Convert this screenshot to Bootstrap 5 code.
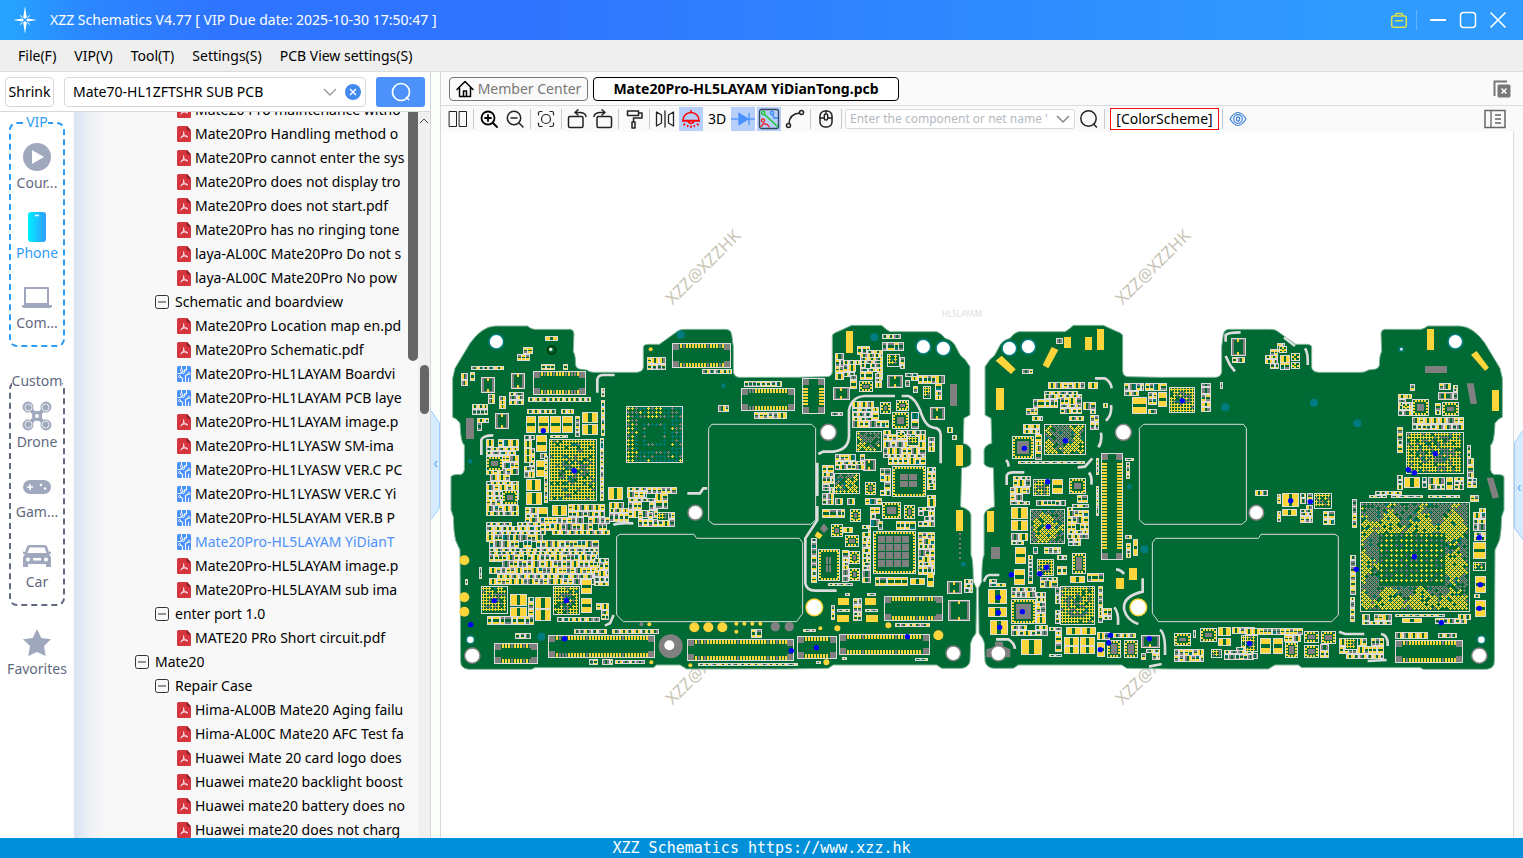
<!DOCTYPE html>
<html lang="en">
<head>
<meta charset="utf-8">
<meta name="viewport" content="width=device-width, initial-scale=1">
<title>XZZ Schematics</title>
<link href="https://cdn.jsdelivr.net/npm/bootstrap@5.3.0/dist/css/bootstrap.min.css" rel="stylesheet">
<style>
  body { font: 14px/20px "Noto Sans", "Open Sans", sans-serif; color: #000; background: #fff; }
  button { color: inherit; }
  .plain { background: none; border: 0; padding: 0; }
  .titlebar { height: 40px; gap: 12px; color: #fff; background: linear-gradient(90deg, #25a5ff 0, #2b86ff 90px, #2f74ff 220px, #2f74ff 520px, #2f9bff 1350px); }
  .menubar { height: 32px; gap: 18px; padding-left: 18px; background: #efefef; border-bottom: 1px solid #dcdcdc; }
  .menubar a { color: #000; text-decoration: none; }
  .side { width: 431px; border-right: 1px solid #d6d6d6; }
  .finder { height: 40px; gap: 10px; padding: 0 5px; border-bottom: 1px solid #d6dad6; }
  .finder > .shrink { width: 49px; height: 30px; border: 1px solid #d9d9d9; border-radius: 4px; background: #fff; }
  .combo { height: 30px; border: 1px solid #d9d9d9; border-radius: 4px; }
  .combo input { border: 0; outline: 0; min-width: 0; background: none; color: #000; }
  .combo input::placeholder { color: #b4b9c1; opacity: 1; }
  .go { width: 49px; height: 30px; background: #4d92fb; border-radius: 3px; }
  .rail { width: 74px; padding-top: 10px; color: #5f6980; }
  .rail-box { width: 56px; padding-bottom: 3px; border: 2px dashed #5f6980; border-radius: 8px; }
  .rail-box + .rail-box { margin-top: 34px; }
  .rail-box.vip { border-color: #2e9bf5; }
  .rail-name { margin-top: -12px; line-height: 20px; }
  .rail-name span { background: #fff; }
  .vip .rail-name, .rail .on { color: #2e9bf5; }
  .rail-item { height: 70px; width: 66px; }
  .rail-item.last { margin-top: 12px; }
  .rail-item svg { width: 32px; height: 32px; fill: #a0a8bd; }
  .tree { background: linear-gradient(90deg, #d8e2f3 0, #eceff5 14px, #f8f8f8 34px); min-width: 0; }
  .tree ul { list-style: none; margin: 0; padding: 0; }
  .tree-list { margin-top: -14px !important; width: 333px; overflow: hidden; }
  .tree li > button { display: flex; align-items: center; height: 24px; white-space: nowrap; }
  .tree .pick { color: #4d92fb; }
  .lvl1 > li > button { padding-left: 61px; gap: 6px; }
  .lvl2 > li > button { padding-left: 81px; gap: 6px; }
  .lvl3 > li > button { padding-left: 103px; gap: 4px; }
  .inner-bar { width: 10px; height: 249px; background: #666; border-radius: 0 0 5px 5px; }
  .outer-bar { width: 12px; background: #f0f0f0; }
  .outer-bar i { width: 9px; height: 49px; background: #666; border-radius: 5px; margin-top: 239px; }
  .splitter { width: 9px; padding-top: 19px; background: #fafffa; }
  .view { border-left: 1px solid #d9d9d9; min-width: 0; }
  .tabs { height: 34px; gap: 5px; background: #fafafa; border-bottom: 1px solid #dcdcdc; }
  .doc-tab { height: 24px; border: 1px solid #000; border-radius: 4px; background: #fff; }
  .doc-tab.home { width: 139px; color: #777; border-color: #777; background: #fafafa; }
  .doc-tab.file { width: 306px; font-weight: 700; }
  .tools { height: 26px; background: #fafafa; gap: 2px; padding-left: 5px; }
  .tools button.tool { width: 24px; height: 24px; flex: none; display: flex; align-items: center; justify-content: center; }
  .tool.held { background: #b6cffb !important; }
  .tools hr { width: 1px; height: 20px; margin: 0 1px; border: 0; background: #c9c9c9; opacity: 1; flex: none; }
  .net { width: 230px; height: 20px; border: 1px solid #d9d9d9; border-radius: 3px; background: #fff; font-size: 12px; }
  .scheme { width: 109px; height: 22px; border: 1px solid #e11; margin-left: 2px; background: #fff; }
  .stage { min-height: 0; background: #fff; }
  .gutter { width: 10px; background: #fafafa; border-left: 1px solid #d9d9d9; }
  .foot { height: 20px; background: #0090d9; color: #fff; font: 15px/20px "DejaVu Sans Mono", monospace; }
  .line { fill: none; stroke: #222; stroke-width: 1.5; stroke-linecap: round; stroke-linejoin: round; }
</style>
</head>
<body class="vh-100 d-flex flex-column overflow-hidden">

<svg width="0" height="0" class="position-absolute" aria-hidden="true">
  <defs>
    <symbol id="pdf" viewBox="0 0 14 16">
      <path d="M1.500 0H10l4 4.500V14.500a1.500 1.500 0 0 1-1.500 1.500h-11A1.500 1.500 0 0 1 0 14.500v-13A1.500 1.500 0 0 1 1.500 0Z" fill="#d4353f"/>
      <path d="M10 0l4 4.500h-4Z" fill="#8e1a22"/>
      <path d="M6.600 5.500c.8 2-.3 4.800-3 6.700M7 8.300c.8 1.600 2 2.500 4 2.700M4.600 10.700c1.800-.8 3.500-1 5.600-.6" fill="none" stroke="#fff" stroke-width="1"/>
    </symbol>
    <symbol id="pcb" viewBox="0 0 14 16">
      <rect width="14" height="16" rx="1.500" fill="#4c91fa"/>
      <path d="M4.500 0v3.500M9.500 0v4h-2v2.500M.5 7.500h3l2-1.500M5.500 16v-3.500L3 10.500M8.500 16V9.500l3-1.500M11.500 16v-4" fill="none" stroke="#fff" stroke-width="1.100"/>
      <g fill="#4c91fa" stroke="#fff" stroke-width=".9"><circle cx="4.500" cy="4.300" r="1"/><circle cx="6.300" cy="6.500" r="1"/><circle cx="2.600" cy="10.500" r="1"/><circle cx="12" cy="7.500" r="1"/></g>
    </symbol>
    <symbol id="minus" viewBox="0 0 14 14">
      <rect x=".5" y=".5" width="13" height="13" rx="2" fill="none" stroke="#333"/><path d="M3 7h8" stroke="#333"/>
    </symbol>
  </defs>
</svg>

<header class="titlebar d-flex align-items-center ps-2 flex-shrink-0">
  <svg class="ms-1" width="26" height="32" viewBox="0 0 26 32" fill="#fff">
    <path d="M13 2l1.800 11.500L13 15l-1.800-1.500ZM13 30l1.800-11.500L13 17l-1.800 1.500ZM1 16l9.500-1.600L12 16l-1.500 1.600ZM25 16l-9.500-1.600L14 16l1.500 1.600Z"/>
    <path d="M8 11.500q2 1 2.500 2.300M18 11.500q-2 1-2.500 2.300M8 20.500q2-1 2.500-2.300M18 20.500q-2-1-2.500-2.300" stroke="#fff" fill="none"/>
  </svg>
  <span>XZZ Schematics V4.77 [ VIP Due date: 2025-10-30 17:50:47 ]</span>
  <div class="ms-auto d-flex align-items-center pe-3">
    <button class="plain" aria-label="Membership"><svg class="d-block" width="18" height="18" viewBox="0 0 18 18" fill="none" stroke="#d5e04a" stroke-width="1.500"><rect x="1.700" y="5" width="14.600" height="11.300" rx="2"/><path d="M5.500 5V3.500a1 1 0 0 1 1-1h5a1 1 0 0 1 1 1V5M5 9.700h8"/></svg></button>
    <span class="vr mx-2 my-auto" style="height:20px"></span>
    <button class="plain ms-1 me-2" aria-label="Minimize"><svg class="d-block" width="18" height="18" viewBox="0 0 18 18"><path d="M1 9h16" stroke="#fff" stroke-width="2"/></svg></button>
    <button class="plain ms-1 me-2" aria-label="Maximize"><svg class="d-block" width="18" height="18" viewBox="0 0 18 18"><rect x="1.500" y="1.500" width="15" height="15" rx="3" fill="none" stroke="#fff" stroke-width="1.500"/></svg></button>
    <button class="plain ms-1" aria-label="Close"><svg class="d-block" width="18" height="18" viewBox="0 0 18 18"><path d="M1.500 1.500l15 15M16.500 1.500l-15 15" stroke="#fff" stroke-width="1.600"/></svg></button>
  </div>
</header>

<nav class="menubar d-flex align-items-center flex-shrink-0">
  <a href="#">File(F)</a><a href="#">VIP(V)</a><a href="#">Tool(T)</a><a href="#">Settings(S)</a><a href="#">PCB View settings(S)</a>
</nav>

<main class="d-flex flex-grow-1" style="min-height:0">
  <section class="side d-flex flex-column flex-shrink-0">
    <div class="finder d-flex align-items-center flex-shrink-0">
      <button class="shrink p-0">Shrink</button>
      <div class="combo d-flex align-items-center flex-grow-1 ps-2 pe-1">
        <input class="flex-grow-1 p-0" type="text" value="Mate70-HL1ZFTSHR SUB PCB" aria-label="Search files">
        <button class="plain me-2" aria-label="Show list"><svg class="d-block" width="14" height="14" viewBox="0 0 14 14"><path d="M1 4l6 6 6-6" fill="none" stroke="#999" stroke-width="1.400"/></svg></button>
        <button class="plain" aria-label="Clear"><svg class="d-block" width="16" height="16" viewBox="0 0 16 16"><circle cx="8" cy="8" r="8" fill="#4289ee"/><path d="M5 5l6 6M11 5l-6 6" stroke="#fff" stroke-width="1.400"/></svg></button>
      </div>
      <button class="plain go d-flex align-items-center justify-content-center" aria-label="Search"><svg width="22" height="20" viewBox="0 0 22 20" fill="none" stroke="#fff" stroke-width="1.700"><circle cx="11" cy="10" r="8.500"/><path d="M16 15l3 3"/></svg></button>
    </div>

    <div class="d-flex flex-grow-1 overflow-hidden">
      <nav class="rail d-flex flex-column align-items-center flex-shrink-0">
        <div class="rail-box vip d-flex flex-column align-items-center">
          <div class="rail-name"><span>VIP</span></div>
          <button class="plain rail-item"><svg viewBox="0 0 32 32"><path fill-rule="evenodd" d="M16 2a14 14 0 1 1 0 28 14 14 0 0 1 0-28Zm-5 7v14l12-7Z"/></svg><div>Cour...</div></button>
          <button class="plain rail-item on"><svg viewBox="0 0 32 32"><defs><linearGradient id="ph"><stop offset="0" stop-color="#00efff"/><stop offset="1" stop-color="#2f9bff"/></linearGradient></defs><rect x="7" y="1" width="18" height="30" rx="3" fill="url(#ph)"/><path d="M14 4.500h4" stroke="#fff" stroke-width="1.500"/></svg><div>Phone</div></button>
          <button class="plain rail-item"><svg viewBox="0 0 32 32"><path fill-rule="evenodd" d="M5 6h22q1 0 1 1v17H3V7q0-1 1-1Zm0 3v13h21V8H5ZM1 24h30v1q0 2-2 2H3q-2 0-2-2Z"/></svg><div>Com...</div></button>
        </div>
        <div class="rail-box d-flex flex-column align-items-center">
          <div class="rail-name"><span>Custom</span></div>
          <button class="plain rail-item"><svg viewBox="0 0 32 32"><path d="M7 7l18 18M25 7L7 25" stroke="#a0a8bd" stroke-width="4"/><circle cx="16" cy="16" r="5"/><circle cx="16" cy="16" r="2" fill="#fff"/><g fill="#a0a8bd" stroke="#a0a8bd"><circle cx="7" cy="7" r="5"/><circle cx="25" cy="7" r="5"/><circle cx="7" cy="25" r="5"/><circle cx="25" cy="25" r="5"/></g><g fill="none" stroke="#fff" stroke-width=".8"><circle cx="7.500" cy="7.500" r="3.500"/><circle cx="24.500" cy="7.500" r="3.500"/><circle cx="7.500" cy="24.500" r="3.500"/><circle cx="24.500" cy="24.500" r="3.500"/></g></svg><div>Drone</div></button>
          <button class="plain rail-item"><svg viewBox="0 0 32 32"><rect x="2" y="10" width="28" height="14" rx="7"/><path d="M6 17h6M9 14v6" stroke="#fff" stroke-width="1.600"/><circle cx="20" cy="15" r="1.200" fill="#fff"/><circle cx="24" cy="18.500" r="1.200" fill="#fff"/></svg><div>Gam...</div></button>
          <button class="plain rail-item"><svg viewBox="0 0 32 32"><path fill-rule="evenodd" d="M8 5h16q1.500 0 2 1.500L28 12l2-.5v2l-2 1q2 1 2 4V27h-5v-3H7v3H2v-8.500q0-3 2-4l-2-1v-2l2 .5 2-5.500Q6.500 5 8 5Zm.5 2.500L6.500 13h19l-2-5.500ZM7 17.500a2 2 0 1 0 0 4 2 2 0 0 0 0-4Zm18 0a2 2 0 1 0 0 4 2 2 0 0 0 0-4ZM12 18v2.500h8V18Z"/></svg><div>Car</div></button>
        </div>
        <button class="plain rail-item last"><svg viewBox="0 0 32 32"><path d="M16 2l4.300 8.900 9.700 1.300-7 6.900 1.700 9.900L16 25l-8.700 4L9 19.100l-7-6.900 9.700-1.300Z"/></svg><div>Favorites</div></button>
      </nav>

      <div class="tree d-flex flex-grow-1">
        <ul class="tree-list flex-shrink-0 lvl1" id="tree"></ul>
        <div class="inner-bar ms-auto"></div>
      </div>
      <div class="outer-bar d-flex flex-column align-items-center flex-shrink-0">
        <svg class="mt-1" width="10" height="10" viewBox="0 0 10 10"><path d="M1 7l4-4 4 4" fill="none" stroke="#444"/></svg>
        <i></i>
      </div>
    </div>
  </section>

  <div class="splitter d-flex align-items-center flex-shrink-0">
    <button class="plain" aria-label="Collapse left panel"><svg class="d-block" width="9" height="110" viewBox="0 0 9 110"><path d="M0 .5l8.500 12.500v85L0 109.500" fill="#d6ebff" stroke="#9ccfff"/><path d="M6 51L3.500 54 6 57" fill="none" stroke="#2e8ff0"/></svg></button>
  </div>

  <section class="view d-flex flex-column flex-grow-1">
    <div class="tabs d-flex align-items-center flex-shrink-0 ps-2 pe-2">
      <button class="doc-tab home p-0 d-flex align-items-center justify-content-center gap-1"><svg width="18" height="18" viewBox="0 0 18 18" class="line" style="stroke:#000"><path d="M1 9.500L9 1.500l8 8M3.500 8v8.500h11V8M7.500 16v-5h3v5"/></svg>Member Center</button>
      <button class="doc-tab file p-0">Mate20Pro-HL5LAYAM YiDianTong.pcb</button>
      <button class="plain ms-auto me-1" aria-label="Close all tabs"><svg class="d-block" width="18" height="18" viewBox="0 0 18 18"><path d="M1.500 16V1.500H14" fill="none" stroke="#777" stroke-width="2"/><rect x="4.500" y="4.500" width="13" height="13" rx="1.500" fill="#777"/><path d="M8.500 8.500l5 5M13.500 8.500l-5 5" stroke="#fff" stroke-width="1.500"/></svg></button>
    </div>
    <div class="tools d-flex align-items-center flex-shrink-0">
      <button class="plain tool" aria-label="Split view"><svg width="20" height="18" viewBox="0 0 20 18" class="line" style="stroke-width:1"><path d="M1.500 1.500h7v15h-7ZM11.500 1.500h7v15h-7Z"/></svg></button>
      <hr>
      <button class="plain tool" aria-label="Zoom in"><svg width="18" height="18" viewBox="0 0 18 18" class="line" style="stroke:#000;stroke-width:1.800"><circle cx="8" cy="8" r="6.500"/><path d="M13 13l4 4M5 8h6M8 5v6"/></svg></button>
      <button class="plain tool" aria-label="Zoom out"><svg width="18" height="18" viewBox="0 0 18 18" class="line"><circle cx="8" cy="8" r="6.700"/><path d="M13 13l4 4M5 8h6"/></svg></button>
      <hr>
      <button class="plain tool" aria-label="Fit"><svg width="18" height="18" viewBox="0 0 18 18" class="line" style="stroke-width:1.200"><circle cx="9" cy="9" r="4.500"/><path d="M1.500 5V3q0-1.500 1.500-1.500h2M13 1.500h2q1.500 0 1.500 1.500v2M1.500 13v2q0 1.500 1.500 1.500h2M16.500 13v2q0 1.500-1.500 1.500h-2"/></svg></button>
      <hr>
      <button class="plain tool" aria-label="Rotate right"><svg width="20" height="20" viewBox="0 0 20 20" class="line"><rect x="1.500" y="7.500" width="14.500" height="11" rx="1.500"/><path d="M8.500 3.500h5q5 .5 5.500 4M11 .8L8 3.500 11 6"/></svg></button>
      <button class="plain tool" aria-label="Rotate left"><svg width="20" height="20" viewBox="0 0 20 20" class="line"><rect x="4" y="7.500" width="14.500" height="11" rx="1.500"/><path d="M11.500 3.500h-5q-5 .5-5.500 4M9 .8l3 2.700L9 6"/></svg></button>
      <hr>
      <button class="plain tool" aria-label="Paint"><svg width="18" height="20" viewBox="0 0 18 20" class="line"><path d="M2.500 2h11v4.500h-11ZM13.500 4H17v5H8.500v4M7 13h3v6H7Z"/></svg></button>
      <hr>
      <button class="plain tool" aria-label="Mirror"><svg width="20" height="18" viewBox="0 0 20 18" class="line" style="stroke-width:1.300"><path d="M1.500 2v14l5-3V5ZM18.500 2v14l-5-3V5ZM10 1v16"/></svg></button>
      <button class="plain tool held" aria-label="Light"><svg width="20" height="20" viewBox="0 0 20 20" fill="none" stroke="#f00" stroke-width="1.500"><path d="M10 1v2M2 11.500a8 8 0 0 1 16 0ZM1 12h18M7 12.500q3 4 6 0M4 14.500l-1.500 2M7 16l-.5 2M10 16.500V19M13 16l.5 2M16 14.500l1.500 2"/></svg></button>
      <button class="plain tool">3D</button>
      <button class="plain tool held" aria-label="Diode"><svg width="24" height="16" viewBox="0 0 24 16" stroke="#4a90ff" stroke-width="1.300"><path d="M0 8h24"/><path d="M8 2.500v11L17 8Z" fill="#4a90ff"/><path d="M18 2v12"/></svg></button>
      <button class="plain tool held" aria-label="Nets"><svg width="22" height="22" viewBox="0 0 22 22" fill="none" stroke-width="1.300"><rect x="1.500" y="1.500" width="19" height="19" rx="2" stroke="#345"/><g stroke="#1c2"><path d="M6 6l6 5.500 8 7.500"/><circle cx="5.200" cy="5" r="1.600"/></g><g stroke="#e22"><path d="M2.500 19l3-3.500 4 1 2 3"/><circle cx="5" cy="12.500" r="1.600"/></g><g stroke="#38f"><path d="M14.500 6.500l1.500 3.500h4"/><circle cx="14" cy="5" r="1.600"/></g></svg></button>
      <button class="plain tool" aria-label="Wire"><svg width="20" height="20" viewBox="0 0 20 20" class="line"><circle cx="3.500" cy="16.500" r="2"/><circle cx="16.500" cy="3.500" r="2"/><path d="M4 14.500Q4.500 5 14.500 4"/></svg></button>
      <hr>
      <button class="plain tool" aria-label="Mouse"><svg width="18" height="20" viewBox="0 0 18 20" class="line"><rect x="3" y="2" width="12" height="16" rx="5"/><path d="M3 9h4M11 9h4M9 2v2"/><rect x="7.300" y="5" width="3.400" height="6" rx="1.500"/></svg></button>
      <hr>
      <div class="combo net d-flex align-items-center ps-0 pe-1">
        <input class="flex-grow-1 p-0 ps-1" type="text" placeholder="Enter the component or net name '" aria-label="Component or net name">
        <button class="plain" aria-label="Show history"><svg class="d-block ms-1" width="14" height="12" viewBox="0 0 14 12"><path d="M1 3l6 6 6-6" fill="none" stroke="#888" stroke-width="1.500"/></svg></button>
      </div>
      <button class="plain tool" aria-label="Find"><svg width="20" height="20" viewBox="0 0 20 20" class="line"><circle cx="9.500" cy="9.500" r="7.700"/><path d="M14.500 15l3 3"/></svg></button>
      <hr>
      <button class="scheme p-0">[ColorScheme]</button>
      <hr>
      <button class="plain tool" aria-label="Visibility"><svg width="18" height="16" viewBox="0 0 18 16" fill="none" stroke="#3b7fd9" stroke-width="1.200"><path d="M1 8q8-13 16 0-8 13-16 0Z"/><circle cx="9" cy="8" r="4.300"/><ellipse cx="9" cy="8" rx="1.600" ry="2.200"/></svg></button>
      <button class="plain tool ms-auto me-3" aria-label="Side panel"><svg width="22" height="20" viewBox="0 0 22 20" fill="none" stroke="#666" stroke-width="1.500"><rect x="1" y="1.500" width="20" height="17"/><path d="M7 2v16M11 6h6M11 10h6M11 14h6" stroke-width="1.300"/></svg></button>
    </div>
    <div class="d-flex flex-grow-1 stage">
      <svg id="stage" class="flex-grow-1 d-block w-100 h-100" viewBox="441 132 1072 706" role="img" aria-label="Board view"></svg>
      <div class="gutter d-flex align-items-center flex-shrink-0">
        <button class="plain" aria-label="Open right panel"><svg class="d-block" width="9" height="110" viewBox="0 0 9 110"><path d="M9 .5L.5 13v85L9 109.500" fill="#d6ebff" stroke="#9ccfff"/><path d="M6.500 55L4 58l2.500 3" fill="none" stroke="#2e8ff0"/></svg></button>
      </div>
    </div>
  </section>
</main>

<footer class="foot text-center flex-shrink-0">XZZ Schematics https://www.xzz.hk</footer>

<script src="https://cdn.jsdelivr.net/npm/bootstrap@5.3.0/dist/js/bootstrap.bundle.min.js"></script>
<script>
// ---- file tree: "p" pdf, "b" board file, "*" selected board file ----
const files = [
  ['', ['', 'pMate20 Pro maintenance witho', 'pMate20Pro Handling method o', 'pMate20Pro cannot enter the sys', 'pMate20Pro does not display tro', 'pMate20Pro does not start.pdf', 'pMate20Pro has no ringing tone', 'playa-AL00C Mate20Pro Do not s', 'playa-AL00C Mate20Pro No pow'],
   ['Schematic and boardview', 'pMate20Pro Location map en.pd', 'pMate20Pro Schematic.pdf', 'bMate20Pro-HL1LAYAM Boardvi', 'bMate20Pro-HL1LAYAM PCB laye', 'pMate20Pro-HL1LAYAM image.p', 'pMate20Pro-HL1LYASW SM-ima', 'bMate20Pro-HL1LYASW VER.C PC', 'bMate20Pro-HL1LYASW VER.C Yi', 'bMate20Pro-HL5LAYAM VER.B P', '*Mate20Pro-HL5LAYAM YiDianT', 'pMate20Pro-HL5LAYAM image.p', 'pMate20Pro-HL5LAYAM sub ima'],
   ['enter port 1.0', 'pMATE20 PRo Short circuit.pdf']],
  ['Mate20', ['Repair Case', 'pHima-AL00B Mate20 Aging failu', 'pHima-AL00C Mate20 AFC Test fa', 'pHuawei Mate 20 card logo does', 'pHuawei mate20 backlight boost', 'pHuawei mate20 battery does no', 'pHuawei mate20 does not charg']]
];
const fold = t => t ? `<button class="plain"><svg width="14" height="14"><use href="#minus"/></svg>${t}</button>` : '';
document.getElementById('tree').innerHTML = files.map(([name, ...groups]) =>
  `<li>${fold(name)}<ul class="lvl2">${groups.map(([g, ...items]) =>
    `<li>${fold(g)}<ul class="lvl3">${items.map(f =>
      `<li><button class="plain${f[0] === '*' ? ' pick' : ''}"><svg width="14" height="16"><use href="#${f[0] === 'p' ? 'pdf' : 'pcb'}"/></svg>${f.slice(1)}</button></li>`).join('')}</ul></li>`).join('')}</ul></li>`).join('');

// ---- board drawing ----
let seed = 11;
const rnd = () => (seed = (seed * 16807) % 2147483647) / 2147483647;
const G = '#006a35', Y = '#ffd53c', A = '#808080', W = '#dcdcdc', T = '#007c80', B = '#0000ff';
let out = '', lay = {};
const box = (c, x, y, w, h) => { if (w > 0 && h > 0) lay[c] = (lay[c] || '') + `M${x} ${y}h${w}v${h}h${-w}z`; };
const flush = () => { for (const c of [G, W, T, A, Y]) if (lay[c]) out += `<path fill="${c}" d="${lay[c]}"/>`; lay = {}; };
const frame = (x, y, w, h) => { box(G, x, y, w, h); box(W, x, y, w, 1); box(W, x, y + h - 1, w, 1); box(W, x, y, 1, h); box(W, x + w - 1, y, 1, h); };
const tint = () => { const r = rnd(); return r < .62 ? Y : r < .97 ? A : T; };
function part(x, y, w, h, solid) {
  frame(x, y, w, h);
  const c = solid ? Y : tint(), d = solid ? Y : tint();
  if (w >= h) { const p = Math.max(1, Math.floor((w - 2) * .4)); box(c, x + 1, y + 1, p, h - 2); box(d, x + w - 1 - p, y + 1, p, h - 2); }
  else { const p = Math.max(1, Math.floor((h - 2) * .4)); box(c, x + 1, y + 1, w - 2, p); box(d, x + 1, y + h - 1 - p, w - 2, p); }
}
function plus(x, y, c) { box(c, x - 1, y, 3, 1); box(c, x, y - 1, 1, 1); box(c, x, y + 1, 1, 1); }
const draw = {
  // scattered small parts, placed in columns or rows along the longer side
  f(x, y, w, h) {
    for (let r = y; r < y + h - 2;) {
      let rh = Math.min(y + h - r, [4, 5, 7, 8][Math.floor(rnd() * 4)]);
      if (y + h - r - rh < 4) rh = Math.min(y + h - r, 9);
      for (let q = x; q < x + w - 2;) {
        let pw = Math.min(x + w - q, rh > 5 ? (rnd() < .65 ? 5 : 8) : (rnd() < .55 ? 8 : 6));
        if (x + w - q - pw < 3) pw = Math.min(x + w - q, 10);
        if (rnd() > .1 && pw > 2) part(q, r, pw, rh);
        q += pw - (rnd() < .5 ? 1 : 0);
      }
      r += rh - (rnd() < .5 ? 1 : 0);
    }
  },
  // large two-pad part
  c(x, y, w, h) { part(x, y, w, h, true); },
  // boxed part with grey ends
  g(x, y, w, h) { frame(x, y, w, h); box(A, x + 1, y + 1, 2, h - 2); box(A, x + w - 3, y + 1, 2, h - 2); box(A, x + 1, y + 1, w - 2, 1); box(A, x + 1, y + h - 2, w - 2, 1); box(Y, x + (w >> 1) - 1, y + 1, 2, 3); box(Y, x + (w >> 1) - 1, y + h - 4, 2, 3); },
  // chip with edge pins and centre pads
  k(x, y, w, h, n = 1) {
    frame(x, y, w, h);
    for (let q = x + 3; q < x + w - 3; q += 3) { box(Y, q, y + 1, 2, 2); box(Y, q, y + h - 3, 2, 2); }
    for (let q = y + 3; q < y + h - 3; q += 3) { box(Y, x + 1, q, 2, 2); box(Y, x + w - 3, q, 2, 2); }
    if (n > 1) {
      const m = n === 2 ? 8 : 5, iw = Math.floor((w - 2 * m) / n), ih = Math.floor((h - 2 * m) / n);
      for (let i = 0; i < n; i++) for (let j = 0; j < n; j++) box(A, x + m + i * iw, y + m + j * ih, iw - 1, ih - 1);
    } else { const m = w > 15 ? 5 : 4; box(A, x + m, y + m, w - 2 * m, h - 2 * m); if (w <= 15) box(G, x + m, y + m, 1, 1); }
  },
  // ball grid
  b(x, y, w, h, s = 3) {
    frame(x, y, w, h);
    for (let j = y + 2; j < y + h - 2; j += s) for (let i = x + 2; i < x + w - 2; i += s) {
      const mid = Math.hypot(i - x - w / 2, j - y - h / 2) < w / 3, r = rnd();
      if (r > .08) plus(i, j, r < (mid ? .45 : .18) ? A : r < (mid ? .5 : .2) ? T : Y);
    }
  },
  // staggered dense ball grid
  d(x, y, w, h) {
    frame(x, y, w, h);
    let row = 0;
    for (let j = y + 2; j < y + h - 2; j += 2, row++) for (let i = x + 2 + (row % 2 ? 2 : 0); i < x + w - 2; i += 4) {
      const r = rnd(), q = Math.sin(i / 5) + Math.cos(j / 6) + r;
      if (r > .12) plus(i, j, r < .17 ? T : q < .45 ? A : Y);
    }
  },
  // processor: staggered rim, regular centre
  p(x, y, w, h) {
    draw.d(x, y, w, h); flush();
    const m = 19, mt = 31; box(G, x + m, y + mt, w - 2 * m - 6, h - mt - 26); flush();
    for (let j = y + mt + 2; j < y + h - 27; j += 5) for (let i = x + m + 2; i < x + w - m - 7; i += 5) plus(i, j, rnd() < .66 ? Y : A);
  },
  // memory footprint
  m(x, y, w, h) {
    frame(x, y, w, h);
    for (let j = 0; j < 14; j++) for (let i = 0; i < 14; i++) {
      const e = Math.min(i, j, 13 - i, 13 - j);
      if (e < 3 || (e === 4)) { const r = rnd(); plus(x + 2 + i * 4, y + 2 + j * 4, i < 2 || (j < 3 && i > 4 && i < 9) ? (r < .7 ? Y : A) : r < .55 ? T : r < .92 ? A : Y); }
    }
  },
  // connector, pins along the long sides
  n(x, y, w, h) {
    frame(x, y, w, h);
    if (w > h) for (let q = x + 8; q < x + w - 8; q += 3) { const c = rnd() < .85 ? Y : A; box(c, q, y + 1, 2, 4); box(c, q, y + h - 5, 2, 4); }
    else for (let q = y + 10; q < y + h - 10; q += 3) { box(Y, x + 1, q, 5, 2); box(Y, x + w - 6, q, 5, 2); }
    for (const [a, b] of [[x + 1, y + 1], [x + w - 7, y + 1], [x + 1, y + h - 7], [x + w - 7, y + h - 7]]) box(A, a, b, 6, 6);
  },
  y(x, y, w, h) { box(Y, x, y, w, h); },
  a(x, y, w, h) { box(A, x, y, w, h); }
};
// part lists are on a third-of-a-unit grid, relative to each area's left edge
function area(ox, list) {
  for (const s of list.trim().split(/\s*;\s*/)) {
    if (!s) continue;
    const [t, ...n] = s.split(/\s+/); const v = n.map(Number), r = k => Math.round(k / 3);
    draw[t](ox + r(v[0]), 310 + r(v[1]), r(v[2]), r(v[3]), v[4]); flush();
  }
}
const disc = (ox, c, list, ring = '') => list.forEach(([x, y, r]) => out += `<circle cx="${ox + x / 3}" cy="${310 + y / 3}" r="${r / 3}" fill="${c}"${ring && ` stroke="${ring}" stroke-width="1.500"`}/>`);
const lines = (ox, d) => out += `<path transform="translate(${ox} 310) scale(.3333)" d="${d}" fill="none" stroke="${W}" stroke-width="8"/>`;
const poly = (ox, c, pts) => out += `<polygon transform="translate(${ox} 310) scale(.3333)" points="${pts}" fill="${c}"/>`;

const marks = (fill, opacity) => {
  for (const [x, y] of [[703, 267], [1153, 267], [703, 667], [1153, 667]])
    out += `<text transform="translate(${x} ${y}) rotate(-45)" text-anchor="middle" y="6" font-size="17" fill="${fill}" opacity="${opacity}">XZZ@XZZHK</text>`;
};
marks('#c9c5b5', 1);

const edge = 'M45 175L90 100Q125 50 165 48H262Q272 56 282 58H392Q402 60 402 72L400 125Q407 135 407 165Q410 178 425 178L440 180Q450 187 460 187H590Q610 185 610 170V110Q612 103 625 103H658L715 62Q722 58 735 58H860Q873 60 875 72L880 110V185Q882 200 897 202H1070L1160 200Q1175 200 1177 185V75Q1182 68 1200 62L1235 46H1325Q1340 60 1350 65H1490Q1505 70 1515 85Q1540 90 1550 115Q1560 140 1575 148L1590 170V315L1572 325L1570 400Q1590 405 1593 420V460Q1590 472 1565 474L1562 590Q1590 598 1593 615V735Q1600 745 1600 815L1610 835L1608 970Q1595 985 1592 1000L1590 1055Q1585 1073 1565 1075H1505L1490 1065H1180L1165 1075L1035 1077H740L720 1065H650L640 1073H285L275 1078H85Q62 1075 62 1055L60 720Q42 690 42 660L40 620L33 600V500Q38 492 62 494Q72 490 73 480V405Q62 400 60 340Q50 325 38 322V205Z';
const cut = 'M815 343H1115L1127 355V630L1112 643H820L806 632V355ZM540 673H762L770 685H1078L1088 698V910L1070 935H550L530 915V680Z';
for (const t of ['translate(440 310) scale(.3333)', 'translate(1515 310) scale(-.3333 .3333)'])
  out += `<g transform="${t}"><path d="${edge}" fill="${G}" stroke="#7fb598" stroke-width="3"/><path d="${cut}" fill="none" stroke="${W}" stroke-width="3"/></g>`;

out += '<g shape-rendering="crispEdges">';
area(440, `c 316 79 40 15; f 250 112 30 20; f 232 132 40 20; f 92 169 98 12; n 278 183 158 72; g 122 202 42 48; g 212 190 42 48; g 166 310 42 48; f 303 162 80 17; f 64 190 20 40; f 90 185 14 32; f 145 252 20 30; f 178 258 22 40; f 208 245 44 38; f 95 283 48 32; f 110 325 35 40; f 265 260 190 15; a 78 325 24 62;
 f 262 297 140 16; c 257 318 30 50; c 293 318 34 50; c 330 318 34 50; c 366 318 34 50; c 427 307 48 32; c 427 342 48 32; f 484 210 13 170; f 405 297 16 84; f 330 375 55 9; f 252 375 34 130; c 288 375 32 50; f 300 430 20 18; c 288 450 32 50; c 257 507 46 36; c 257 546 48 40; b 328 388 145 185; f 480 385 12 190; f 313 438 12 140;
 f 137 387 100 230; k 137 437 50 45; k 187 540 48 46; f 255 590 38 50; c 295 592 30 50; c 335 585 46 32; f 385 583 110 40; f 137 637 170 60; f 300 620 210 55; f 146 690 330 65; f 146 750 340 75; b 122 828 80 85; b 340 828 80 88; c 209 853 50 35; c 209 892 50 35; c 286 860 48 35; c 286 898 48 35; c 424 808 34 46; c 424 865 34 46; f 264 860 18 70; f 462 745 45 85; f 468 880 40 20; f 484 900 24 30; f 140 918 140 26; f 350 920 130 14;
 m 558 287 170 170; f 505 530 46 38; c 505 532 46 38; f 560 530 60 32; f 565 565 90 60; f 620 530 90 20; f 645 550 40 50; f 508 575 60 60; f 595 605 110 45; b 650 605 35 26; f 622 142 58 40; n 697 100 178 75; f 785 178 90 14; n 325 975 322 68; n 163 1000 133 63; n 740 988 320 66; f 403 957 100 14; f 517 957 140 14; f 448 1048 72 18; f 525 1050 90 12; f 775 1059 300 9; f 225 970 48 18; f 116 770 10 36; f 75 808 9 18`);
area(700, `y 438 63 21 66; f 547 72 66 15; f 545 95 65 30; b 560 132 40 38; f 470 108 40 32; f 405 128 26 80; f 428 150 50 50; f 480 120 70 90; f 600 140 15 36; k 478 212 42 34; g 562 195 48 40; g 398 230 50 38; f 450 195 20 45; f 525 190 20 45; f 615 190 40 60; f 655 195 80 30; f 705 220 20 50; b 670 228 25 40; a 750 222 21 66; g 690 290 46 40; y 768 405 21 63; y 768 600 21 63; f 742 352 18 18; f 755 375 16 16; n 122 233 162 70; n 306 205 70 108; f 133 212 115 18; f 163 307 98 22; f 35 282 12 24; f 55 285 34 20; f 393 307 35 13;
 f 455 272 65 60; f 515 290 20 50; k 540 277 32 36; k 588 270 38 32; f 455 330 110 25; k 576 305 52 52; f 632 305 24 55; f 550 360 130 105; d 467 362 78 63; k 590 365 24 22; b 622 378 35 30; f 685 380 20 45; g 490 447 40 35; f 405 432 90 48; f 540 475 32 85; f 365 465 35 120; d 403 490 78 63; k 495 515 34 38; k 575 468 102 94 2; f 680 470 28 120; f 405 563 140 22; k 546 576 56 50; k 612 586 34 42; k 450 598 34 40; f 367 597 70 30; f 655 592 50 60; f 510 590 30 60; f 535 632 115 26; k 392 642 36 38; k 434 674 42 36; f 430 650 30 18; k 448 722 34 40; k 448 775 34 38; k 355 718 66 96 2; k 520 664 130 130 4; f 332 685 18 135; f 425 720 20 95; f 485 645 28 175; f 655 665 50 130; f 525 800 100 30; c 630 805 45 22; c 680 785 20 46; f 360 820 100 10;
 y 415 865 34 22; y 496 865 34 22; y 411 915 36 22; y 498 915 36 22; f 460 865 26 70; f 393 885 11 45; f 412 897 40 10; f 495 897 40 10; n 553 858 178 74; g 740 812 46 40; f 792 808 28 42; g 745 870 66 64; n 418 973 273 63; n 290 977 120 70; f 435 850 15 8; f 502 850 28 8; f 585 940 105 12; f 310 958 40 9; f 128 957 58 28; f 325 1053 40 9; f 645 1045 38 9; f 426 1042 16 9; a 778 670 7 6; a 778 684 7 6; a 778 698 7 6; a 778 712 7 6; a 778 726 7 6; a 778 740 7 6`);
area(975, `y 267 82 21 34; y 330 82 21 38; y 366 57 21 63; y 63 234 24 66; y 36 602 21 63; a 48 710 27 36; y 423 804 24 33; y 462 774 24 36; f 243 85 20 18; f 142 177 32 15; f 220 217 150 20; f 208 243 115 24; f 173 267 75 28; f 255 262 65 50; f 137 293 50 20; f 172 318 32 14; f 283 317 60 14; f 325 275 38 35; f 145 343 50 30; d 207 343 127 93; k 110 378 66 70; f 180 373 22 85; f 130 453 200 8; f 345 315 28 75;
 f 447 220 60 38; f 510 220 65 25; c 472 260 44 50; c 548 247 26 46; f 518 245 28 65; b 583 230 79 78; f 678 220 30 88; f 736 216 9 20; g 769 85 46 55; f 770 142 40 19; n 378 430 65 322; f 450 443 28 9; f 453 455 12 50; f 362 445 10 50; f 362 528 10 90; f 385 280 16 16;
 f 113 497 55 32; f 106 530 60 55; b 173 508 50 50; c 231 508 34 46; k 283 505 50 48; f 183 570 90 18; f 305 555 33 25; c 108 590 50 36; c 108 630 50 33; d 166 598 106 106; f 277 583 65 105; f 278 685 40 24; f 108 668 52 35; f 175 712 85 20; c 120 712 33 50; c 118 778 34 48; f 158 735 14 90; b 187 748 50 50; f 245 735 30 60; k 292 730 43 62; f 195 800 55 32; c 285 798 46 22; f 335 790 50 32; f 42 808 50 24; c 40 838 57 46; c 40 892 57 30; c 46 930 54 46; f 107 832 75 34; k 107 868 75 75; f 183 845 30 95; f 107 945 110 32; b 256 828 106 116; f 240 830 14 110; f 370 828 16 110; f 384 895 28 70; f 223 950 38 24; f 240 976 22 50; c 272 952 44 23; c 318 952 46 23; c 266 980 46 26; c 315 980 46 26; c 266 1008 46 23; c 315 1008 46 23; c 137 987 64 48; f 223 1032 38 10; c 365 996 24 46; f 365 965 38 24; k 397 990 42 54; k 448 990 42 54; f 415 970 70 16; g 497 975 56 38; f 497 1017 58 32;
 k 598 970 52 38; k 674 955 52 42; c 729 952 40 26; c 729 985 40 24; b 798 975 45 50; f 598 1018 90 38; b 708 1018 32 28; f 748 1012 90 38; f 770 952 70 20; f 655 960 10 50; f 450 675 20 12; f 453 700 16 44; c 474 688 16 50`);
area(1245, `y 546 57 21 63; y 741 240 21 63; a 540 168 66 21; f 60 118 40 46; f 82 98 40 30; k 103 108 24 22; f 105 135 30 46; f 75 150 26 26; k 138 128 28 24; k 138 156 28 22; f 495 222 40 22; f 458 252 42 66; k 470 280 24 22; k 500 268 50 52; f 583 220 50 22; g 578 246 44 24; k 590 275 52 43; f 570 280 18 36; f 625 225 15 45; f 500 322 155 38; b 484 367 175 127; f 455 350 18 125; f 665 405 12 40; f 667 445 22 60; f 665 505 30 30; c 477 502 48 34; f 532 500 15 34; f 550 500 50 38; c 602 500 20 38; f 628 500 30 38; f 455 495 18 45; f 390 543 82 12; f 373 555 272 10; p 345 576 329 329; f 320 568 14 88; f 316 735 18 120; f 316 860 15 76; f 683 595 38 68; f 688 665 36 28; c 684 697 40 50; b 684 755 40 28; c 690 798 32 50; c 690 870 32 50; f 688 853 18 12; f 350 912 90 32; f 450 912 150 10; c 470 925 60 16; f 570 925 95 18; f 640 912 38 18; f 675 555 26 22;
 f 30 541 38 18; f 97 552 12 85; c 110 550 50 42; c 112 597 44 22; f 165 550 17 34; f 185 550 18 34; f 165 585 38 55; b 207 550 53 48; f 210 603 22 35; f 235 603 36 42; b 0 975 38 50; c 46 985 34 48; c 84 985 30 48; f 0 955 175 22; f 118 975 60 20; k 120 997 38 48; k 177 962 46 36; k 228 962 46 38; k 177 1005 46 38; f 225 1003 28 42; f 282 983 135 62; b 300 985 40 36; n 451 990 204 70; f 450 965 100 22; f 580 970 58 16; f 0 1028 40 18`);
out += '</g>';

lines(440, 'M472 248V208Q475 195 490 195H524M124 435V390Q128 376 160 376M742 550H780L790 535H802M520 645Q530 638 580 640M495 947L510 940L521 915');
lines(700, 'M355 432L370 425H400Q445 420 447 380V300Q455 260 495 258H585M605 258H625Q645 265 660 300Q675 350 700 353Q722 355 722 375V460M352 458V558M352 588V630L316 685V820Q320 842 345 842H410');
lines(975, 'M360 205H390Q408 215 410 235M408 285Q412 315 393 332M378 368Q382 395 370 412M93 450Q102 458 100 470M95 525V497Q98 487 115 487H148M342 487Q352 500 349 524M308 472L330 470L352 445M27 815Q32 795 45 795H73M63 988H100Q118 998 120 1017M423 778Q440 780 447 792M418 892Q432 910 429 945M555 960Q572 970 570 1035M522 1070L560 1062M752 95V75Q760 67 797 67M752 138L765 165L780 184M503 805V845Q440 860 448 900Q455 930 490 942');
lines(1245, 'M117 82L150 108M180 115Q190 130 188 165M282 965L300 972H358M408 972Q430 975 428 1008M368 1053L425 1050');
poly(975, Y, '80,137 122,178 108,192 62,152'); poly(975, Y, '230,111 250,120 220,175 203,165');
poly(1245, Y, '695,123 732,173 720,182 678,134'); poly(1245, A, '665,220 686,220 696,282 677,282'); poly(1245, A, '725,503 745,503 762,562 743,566');
poly(700, A, '372,640 385,656 372,670 360,656'); poly(700, Y, '352,664 368,676 358,688 344,678');
disc(440, T, [[91,454,7],[304,980,12],[722,74,12]]); disc(700, T, [[523,82,12],[790,763,7],[70,227,7]]);
disc(975, T, [[751,292,12],[463,530,7],[508,718,12]]); disc(1245, T, [[207,278,12],[337,340,12]]);
disc(440, Y, [[73,751,15],[73,862,15],[73,905,15],[763,952,15],[805,952,15],[847,952,15],[632,118,6],[628,943,6],[634,1057,6],[751,1066,6]]);
disc(700, Y, [[565,946,9],[715,976,15],[412,955,9],[379,1057,9],[361,955,6],[109,941,6],[133,941,6],[157,941,6],[181,941,6],[109,965,6]]);
disc(700, A, [[226,950,14],[268,950,14]]); disc(440, A, [[692,1009,36],[604,943,6]]);
disc(440, '#fff', [[169,95,22],[91,989,12]], T); disc(440, '#fff', [[97,1037,23],[766,608,22]], A); disc(440, '#fff', [[688,1006,15]]);
disc(440, '#00400a', [[335,120,15]]); disc(440, G, [[335,120,9]]); disc(440, '#fff', [[332,118,5]]);
disc(700, '#fff', [[670,110,22],[730,115,22]], T); disc(700, '#fff', [[385,367,24],[760,1030,22]], A); disc(700, '#fff', [[343,892,25]], Y);
poly(975, A, '60,995 84,995 84,1008 106,1018 106,1042 34,1042 34,1018 60,1010');
disc(975, '#fff', [[103,115,22],[160,110,22]], T); disc(975, '#fff', [[445,367,24],[70,1030,23]], A); disc(975, '#fff', [[490,892,25]], Y);
disc(1245, '#fff', [[631,95,22],[709,989,12],[469,118,6]], T); disc(1245, '#fff', [[34,608,22],[703,1037,23]], A);
disc(440, B, [[310,362,8],[403,482,8],[163,872,8],[379,872,8],[92,944,8],[374,986,8]]);
disc(700, B, [[274,1022,8],[349,1013,8],[622,980,8]]);
disc(975, B, [[218,515,8],[271,392,8],[148,415,8],[622,272,8],[220,650,8],[214,772,8],[194,791,8],[109,794,8],[70,862,8],[70,908,8],[74,952,8],[142,905,8],[406,976,8],[401,998,8],[376,1019,8],[523,986,8],[823,1000,8]]);
disc(1245, B, [[137,572,8],[196,575,8],[571,431,8],[490,479,8],[508,488,8],[508,740,8],[334,778,8],[703,683,8],[706,824,8],[703,895,8],[589,938,8]]);

out += '<text x="962" y="317" text-anchor="middle" font-size="8" fill="#dcdcdc">HL5LAYAM</text>';
document.getElementById('stage').innerHTML = out;
</script>
</body>
</html>
